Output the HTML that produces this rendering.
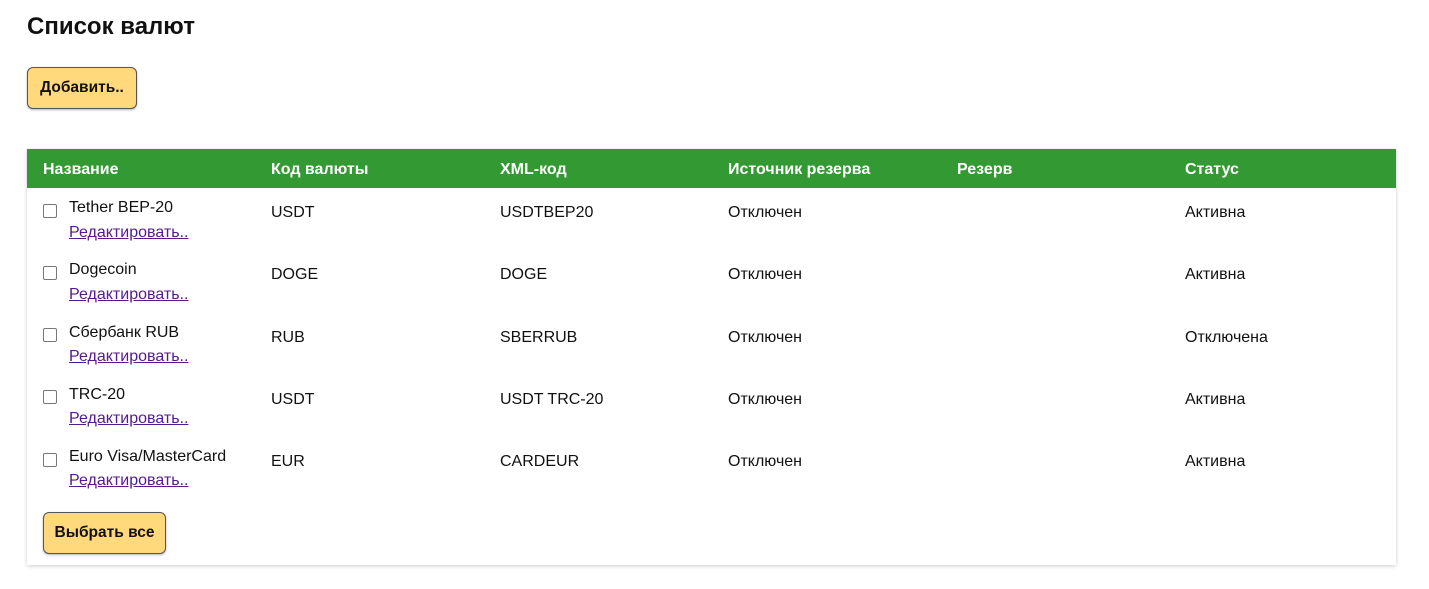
<!DOCTYPE html>
<html><head><meta charset="utf-8"><style>
body{margin:0;width:1429px;height:589px;background:#fff;font-family:"Liberation Sans","DejaVu Sans",sans-serif;color:#111;position:relative;overflow:hidden}
.a{position:absolute;white-space:nowrap}
h1{position:absolute;left:27px;top:13px;margin:0;font-size:24px;font-weight:bold}
.btn{position:absolute;background:#ffd97c;border:1px solid #555;border-radius:6px;box-shadow:0 1px 2px rgba(0,0,0,.3);font-weight:bold;font-size:15.5px;display:flex;align-items:center;justify-content:center;box-sizing:border-box}
.card{position:absolute;left:27px;top:149px;width:1369px;height:416px;background:#fff;box-shadow:0 1px 4px rgba(0,0,0,.2)}
.hd{position:absolute;left:27px;top:149px;width:1369px;height:39px;background:#339933}
.th{position:absolute;top:161px;color:#fff;font-weight:bold;font-size:16px}
.td{font-size:16px}
.cb{position:absolute;left:43px;width:12px;height:12px;border:1px solid #777;border-radius:2px;background:#fff}
a{color:#551a8b;text-decoration:underline;font-size:16px}
</style></head><body>
<h1>Список валют</h1>
<div class="btn" style="left:27px;top:67px;width:110px;height:42px">Добавить..</div>
<div class="card"></div>
<div class="hd"></div>
<div class="a th" style="left:43px">Название</div>
<div class="a th" style="left:271px">Код валюты</div>
<div class="a th" style="left:500px">XML-код</div>
<div class="a th" style="left:728px">Источник резерва</div>
<div class="a th" style="left:957px">Резерв</div>
<div class="a th" style="left:1185px">Статус</div>

<div class="cb" style="top:204px"></div>
<div class="a td" style="left:69px;top:199px">Tether BEP-20</div>
<a class="a" style="left:69px;top:224px">Редактировать..</a>
<div class="a td" style="left:271px;top:204px">USDT</div>
<div class="a td" style="left:500px;top:204px">USDTBEP20</div>
<div class="a td" style="left:728px;top:204px">Отключен</div>
<div class="a td" style="left:1185px;top:204px">Активна</div>

<div class="cb" style="top:266px"></div>
<div class="a td" style="left:69px;top:261px">Dogecoin</div>
<a class="a" style="left:69px;top:286px">Редактировать..</a>
<div class="a td" style="left:271px;top:266px">DOGE</div>
<div class="a td" style="left:500px;top:266px">DOGE</div>
<div class="a td" style="left:728px;top:266px">Отключен</div>
<div class="a td" style="left:1185px;top:266px">Активна</div>

<div class="cb" style="top:328px"></div>
<div class="a td" style="left:69px;top:324px">Сбербанк RUB</div>
<a class="a" style="left:69px;top:348px">Редактировать..</a>
<div class="a td" style="left:271px;top:329px">RUB</div>
<div class="a td" style="left:500px;top:329px">SBERRUB</div>
<div class="a td" style="left:728px;top:329px">Отключен</div>
<div class="a td" style="left:1185px;top:329px">Отключена</div>

<div class="cb" style="top:390px"></div>
<div class="a td" style="left:69px;top:386px">TRC-20</div>
<a class="a" style="left:69px;top:410px">Редактировать..</a>
<div class="a td" style="left:271px;top:391px">USDT</div>
<div class="a td" style="left:500px;top:391px">USDT TRC-20</div>
<div class="a td" style="left:728px;top:391px">Отключен</div>
<div class="a td" style="left:1185px;top:391px">Активна</div>

<div class="cb" style="top:453px"></div>
<div class="a td" style="left:69px;top:448px">Euro Visa/MasterCard</div>
<a class="a" style="left:69px;top:472px">Редактировать..</a>
<div class="a td" style="left:271px;top:453px">EUR</div>
<div class="a td" style="left:500px;top:453px">CARDEUR</div>
<div class="a td" style="left:728px;top:453px">Отключен</div>
<div class="a td" style="left:1185px;top:453px">Активна</div>

<div class="btn" style="left:43px;top:512px;width:123px;height:42px">Выбрать все</div>
</body></html>
